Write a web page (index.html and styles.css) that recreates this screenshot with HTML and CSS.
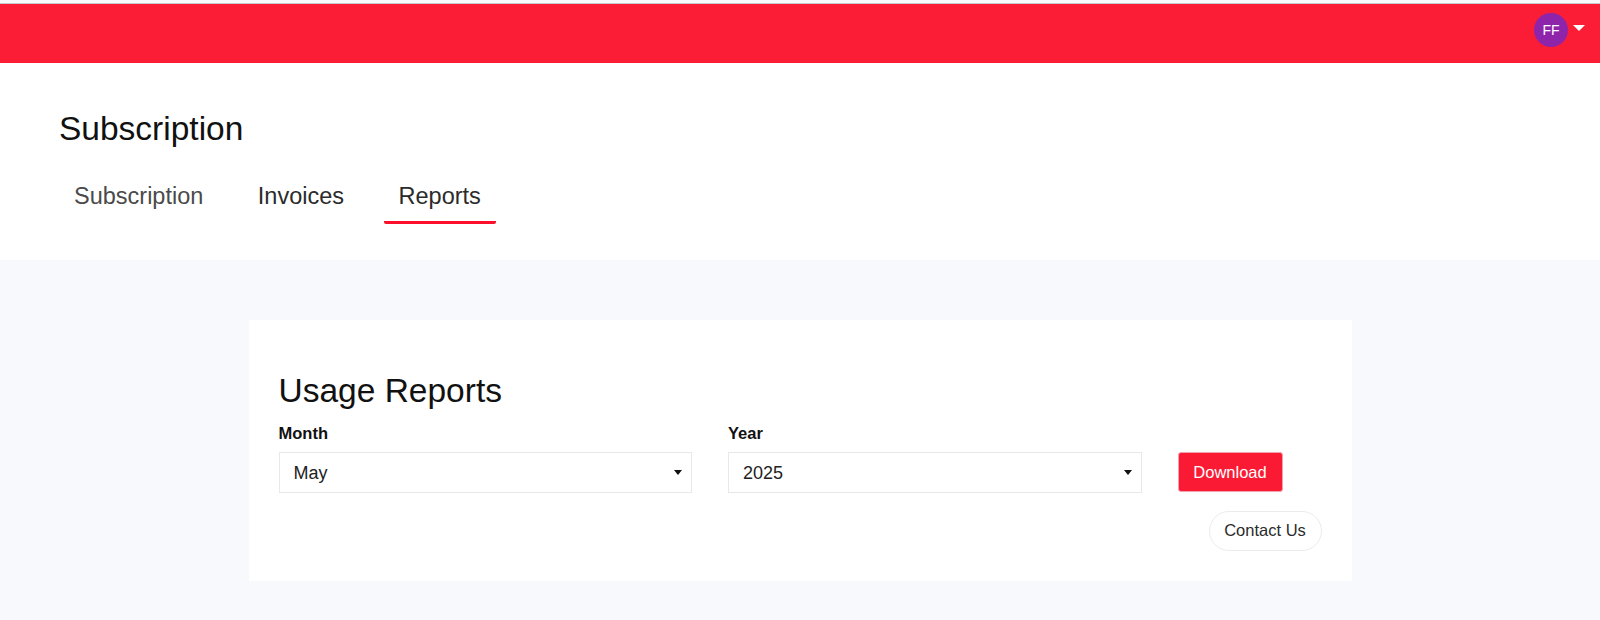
FILE: index.html
```html
<!DOCTYPE html>
<html lang="en">
<head>
    <meta charset="UTF-8">
    <meta name="viewport" content="width=device-width, initial-scale=1.0">
    <title>Subscription</title>
    <link rel="stylesheet" href="styles.css">
</head>
<body>
    <header class="topbar">
        <div class="avatar">FF</div>
        <span class="avatar-caret"></span>
    </header>
    <section class="page-head">
        <h1>Subscription</h1>
        <nav class="tabs">
            <a class="tab" href="#">Subscription</a>
            <a class="tab" href="#">Invoices</a>
            <a class="tab active" href="#">Reports</a>
        </nav>
    </section>
    <main>
        <section class="card">
            <h2>Usage Reports</h2>
            <form class="report-form">
                <div class="field">
                    <label for="month">Month</label>
                    <div class="select-wrap">
                        <select id="month">
                            <option>May</option>
                        </select>
                    </div>
                </div>
                <div class="field">
                    <label for="year">Year</label>
                    <div class="select-wrap">
                        <select id="year">
                            <option>2025</option>
                        </select>
                    </div>
                </div>
                <button class="download" type="button">Download</button>
            </form>
            <div class="contact-row">
                <a class="contact" href="#">Contact Us</a>
            </div>
        </section>
    </main>
</body>
</html>
```

FILE: styles.css
```css
* {
    box-sizing: border-box;
}
html, body {
    height: 100%;
}
body {
    margin: 0;
    font-family: "Liberation Sans", Arial, sans-serif;
    background-color: #f8f9fd;
    color: #111;
    overflow: hidden;
}
.topbar {
    height: 60px;
    margin-top: 3px;
    background: #fb1c36;
    border-top: 1px solid #c9c9c9;
    display: flex;
    justify-content: flex-end;
    align-items: center;
    padding-right: 15px;
}
.avatar {
    width: 34px;
    height: 34px;
    margin-top: -8px;
    border-radius: 50%;
    background: #8e24aa;
    color: #fff;
    font-size: 14px;
    display: flex;
    align-items: center;
    justify-content: center;
}
.avatar-caret {
    width: 0;
    height: 0;
    margin-left: 5px;
    margin-top: -12px;
    border-left: 6px solid transparent;
    border-right: 6px solid transparent;
    border-top: 6px solid #fff;
}
.page-head {
    height: 197px;
    background: #fff;
    padding: 46px 0 0 59px;
}
.page-head h1 {
    margin: 0;
    font-size: 33.5px;
    font-weight: 400;
    line-height: 40px;
}
.tabs {
    display: flex;
    gap: 24.5px;
    margin-top: 29px;
}
.tab {
    padding: 0 15px;
    height: 46px;
    line-height: 36px;
    font-size: 23.5px;
    color: #2b2b2b;
    text-decoration: none;
    border-bottom: 3px solid transparent;
}
.tab:first-child {
    color: #4a4a4a;
}
.tab.active {
    border-bottom-color: #fb0f2b;
    border-radius: 0 0 2px 2px;
}
main {
    padding-top: 60px;
    display: flex;
    justify-content: center;
}
.card {
    width: 1103px;
    height: 261px;
    background: #fff;
    padding: 51px 30px 0;
}
.card h2 {
    margin: 0;
    font-size: 33.5px;
    font-weight: 400;
    line-height: 40px;
}
.report-form {
    display: grid;
    grid-template-columns: 413.5px 413.5px auto;
    column-gap: 36px;
    justify-content: start;
    align-items: end;
    margin-top: 12px;
}
.field label {
    display: block;
    font-size: 16.5px;
    font-weight: 700;
    line-height: 20px;
    margin-bottom: 9px;
}
.select-wrap {
    position: relative;
}
.select-wrap::after {
    content: "";
    position: absolute;
    right: 10px;
    top: 18px;
    border-left: 4.5px solid transparent;
    border-right: 4.5px solid transparent;
    border-top: 5px solid #111;
}
select {
    appearance: none;
    width: 100%;
    height: 41px;
    padding: 0 14px;
    border: 1px solid #e8e8e8;
    border-radius: 0;
    background: #fff;
    color: #222;
    font-family: inherit;
    font-size: 18px;
}
.download {
    width: 105px;
    height: 40px;
    margin-bottom: 1px;
    border: 1px solid #f5a0ad;
    border-radius: 3px;
    background: #fb1a34;
    color: #fff;
    font-family: inherit;
    font-size: 16.5px;
}
.contact-row {
    display: flex;
    justify-content: flex-end;
    margin-top: 18px;
}
.contact {
    width: 113px;
    height: 40px;
    line-height: 37px;
    text-align: center;
    border: 1px solid #ececec;
    border-radius: 20px;
    color: #2b2b2b;
    font-size: 16.5px;
    text-decoration: none;
}
```
